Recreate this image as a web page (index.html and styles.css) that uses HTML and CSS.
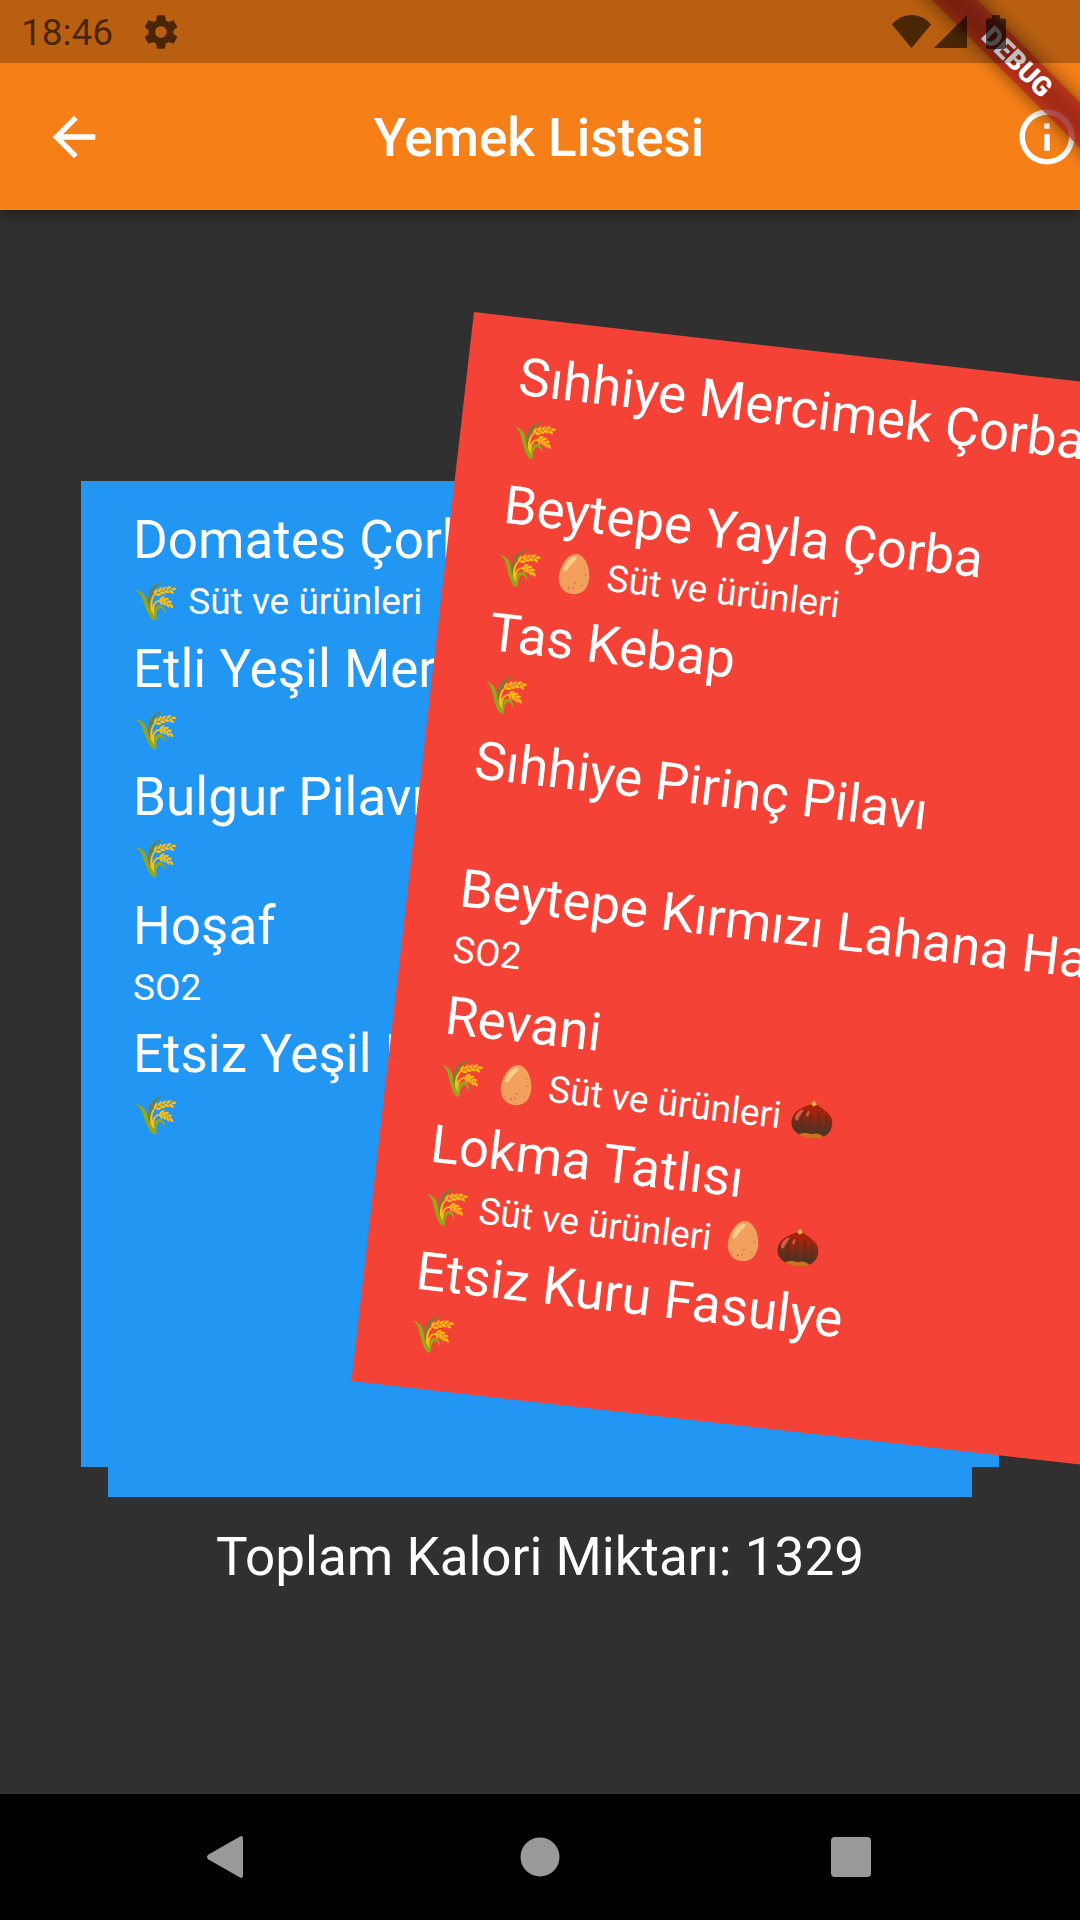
FILE: index.html
```html
<!DOCTYPE html>
<html lang="tr">
<head>
<meta charset="utf-8">
<meta name="viewport" content="width=device-width, initial-scale=1">
<title>Yemek Listesi</title>
<link rel="stylesheet" href="styles.css">
</head>
<body>
<header class="app-bar">
  <button class="icon-button back-button" type="button" aria-label="Geri">
    <svg viewBox="0 0 24 24"><path d="M20 11H7.83l5.59-5.59L12 4l-8 8 8 8 1.41-1.41L7.83 13H20v-2z"/></svg>
  </button>
  <h1 class="title">Yemek Listesi</h1>
  <button class="icon-button" type="button" aria-label="Bilgi">
    <svg viewBox="0 0 24 24"><path d="M11 7h2v2h-2zm0 4h2v6h-2zm1-9C6.48 2 2 6.48 2 12s4.48 10 10 10 10-4.48 10-10S17.52 2 12 2zm0 18c-4.41 0-8-3.59-8-8s3.59-8 8-8 8 3.59 8 8-3.59 8-8 8z"/></svg>
  </button>
</header>

<div class="debug-corner"><div class="debug-banner"><span>DEBUG</span></div></div>

<div class="status-bar">
  <span class="clock">18:46</span>
  <svg class="gear" viewBox="0 0 24 24"><path d="M19.43 12.98c.04-.32.07-.64.07-.98s-.03-.66-.07-.98l2.11-1.65c.19-.15.24-.42.12-.64l-2-3.46c-.12-.22-.39-.3-.61-.22l-2.49 1c-.52-.4-1.08-.73-1.69-.98l-.38-2.65C14.46 2.18 14.25 2 14 2h-4c-.25 0-.46.18-.49.42l-.38 2.65c-.61.25-1.17.59-1.69.98l-2.49-1c-.23-.09-.49 0-.61.22l-2 3.46c-.13.22-.07.49.12.64l2.11 1.65c-.04.32-.07.65-.07.98s.03.66.07.98l-2.11 1.65c-.19.15-.24.42-.12.64l2 3.46c.12.22.39.3.61.22l2.49-1c.52.4 1.08.73 1.69.98l.38 2.65c.03.24.24.42.49.42h4c.25 0 .46-.18.49-.42l.38-2.65c.61-.25 1.17-.59 1.69-.98l2.49 1c.23.09.49 0 .61-.22l2-3.46c.12-.22.07-.49-.12-.64l-2.11-1.65zM12 15.5c-1.93 0-3.5-1.57-3.5-3.5s1.57-3.5 3.5-3.5 3.5 1.57 3.5 3.5-1.57 3.5-3.5 3.5z"/></svg>
  <div class="signals">
    <svg class="wifi" viewBox="0 0 39 33"><path d="M19.500 33L0 9.500C5 3.500 12 0 19.500 0S34 3.500 39 9.500z"/></svg>
    <svg class="cell" viewBox="0 0 33 33"><path d="M0 33L33 0v33z"/></svg>
    <svg class="battery" viewBox="0 0 20 34"><path d="M6 0h8v3.500h3.500Q20 3.500 20 6v25.500q0 2.500-2.500 2.500h-15Q0 34 0 31.500V6q0-2.500 2.500-2.500H6z"/></svg>
  </div>
</div>

<main class="content">
  <div class="deck">
    <div class="card card-back"></div>
    <section class="card card-next">
      <ul class="menu menu-next">
        <li><span class="dish">Domates Çorba</span><span class="tags">🌾 Süt ve ürünleri</span></li>
        <li><span class="dish">Etli Yeşil Mercimek</span><span class="tags">🌾</span></li>
        <li><span class="dish">Bulgur Pilavı</span><span class="tags">🌾</span></li>
        <li><span class="dish">Hoşaf</span><span class="tags">SO2</span></li>
        <li><span class="dish">Etsiz Yeşil Mercimek</span><span class="tags">🌾</span></li>
      </ul>
    </section>
    <section class="card card-front">
      <ul class="menu menu-front">
        <li><span class="dish">Sıhhiye Mercimek Çorba</span><span class="tags">🌾</span></li>
        <li><span class="dish">Beytepe Yayla Çorba</span><span class="tags">🌾 🥚 Süt ve ürünleri</span></li>
        <li><span class="dish">Tas Kebap</span><span class="tags">🌾</span></li>
        <li><span class="dish">Sıhhiye Pirinç Pilavı</span></li>
        <li><span class="dish">Beytepe Kırmızı Lahana Havuç</span><span class="tags">SO2</span></li>
        <li><span class="dish">Revani</span><span class="tags">🌾 🥚 Süt ve ürünleri 🌰</span></li>
        <li><span class="dish">Lokma Tatlısı</span><span class="tags">🌾 Süt ve ürünleri 🥚 🌰</span></li>
        <li><span class="dish">Etsiz Kuru Fasulye</span><span class="tags">🌾</span></li>
      </ul>
    </section>
  </div>
  <p class="total">Toplam Kalori Miktarı: 1329</p>
</main>

<nav class="system-nav">
  <button type="button" aria-label="Geri"><svg viewBox="0 0 42 42"><path d="M36 0.500Q39 -1 39 2.500V39.500Q39 43 36 41.500L4.500 23.500Q1.500 21 4.500 18.500z"/></svg></button>
  <button type="button" aria-label="Ana ekran"><svg viewBox="0 0 42 42"><circle cx="21" cy="21" r="19.500"/></svg></button>
  <button type="button" aria-label="Son uygulamalar"><svg class="recents" viewBox="0 0 50 42"><rect x="1" y="1" width="40" height="40" rx="4"/></svg></button>
</nav>
</body>
</html>
```
FILE: styles.css
```css
* {
  box-sizing: border-box;
}

body {
  margin: 0;
  min-height: 100vh;
  display: flex;
  flex-direction: column;
  position: relative;
  overflow-x: hidden;
  background: #303030;
  color: #fff;
  font-family: Roboto, "Noto Color Emoji", sans-serif;
}

button {
  padding: 0;
  border: 0;
  background: none;
  color: inherit;
  font: inherit;
}

svg {
  display: block;
  fill: currentColor;
}

/* App bar */
.app-bar {
  height: 210px;
  padding: 63px 0 0 42px;
  display: flex;
  align-items: center;
  justify-content: space-between;
  background: #f67f17;
  box-shadow: 0 4px 12px rgba(0, 0, 0, 0.4);
  position: relative;
}

.icon-button,
.icon-button svg {
  width: 66px;
  height: 66px;
}

.back-button svg {
  width: 64px;
  height: 64px;
}

.title {
  margin: 0;
  flex: 1;
  padding: 2px 44px 0 0;
  text-align: center;
  font-size: 53px;
  line-height: 62px;
  font-weight: 500;
}

/* Debug ribbon over the corner */
.debug-corner {
  position: absolute;
  top: 0;
  right: 0;
  width: 300px;
  height: 300px;
  overflow: hidden;
  pointer-events: none;
}

.debug-banner {
  position: absolute;
  top: 46px;
  right: -87px;
  width: 300px;
  height: 32px;
  transform: rotate(45deg);
  text-align: center;
  font-size: 27px;
  line-height: 32px;
  font-weight: 900;
}

.debug-banner::before,
.debug-banner::after {
  content: "";
  position: absolute;
  inset: 0;
  background: rgba(0, 0, 0, 0.5);
  filter: blur(9px);
}

.debug-banner::after {
  background: rgba(183, 28, 28, 0.63);
  filter: none;
}

.debug-banner span {
  position: relative;
  z-index: 1;
}

/* Translucent status bar */
.status-bar {
  position: absolute;
  top: 0;
  left: 0;
  right: 0;
  height: 63px;
  padding: 0 74px 0 21px;
  display: flex;
  align-items: center;
  background: rgba(0, 0, 0, 0.25);
  color: rgba(0, 0, 0, 0.6);
}

.clock {
  padding-top: 3px;
  font-size: 37px;
  line-height: 44px;
}

.gear {
  width: 40px;
  height: 40px;
  margin-left: 28px;
}

.signals {
  margin-left: auto;
  display: flex;
}

.wifi {
  width: 39px;
  height: 33px;
  margin-right: 3px;
}

.cell {
  width: 33px;
  height: 33px;
  margin-right: 19px;
}

.battery {
  width: 20px;
  height: 34px;
}

/* Card deck */
.content {
  flex: 1;
  padding-top: 271px;
  overflow: clip;
}

.deck {
  position: relative;
  display: grid;
  justify-items: center;
}

.card {
  grid-area: 1 / 1;
  padding: 28px 52px 0;
  background: #2196f3;
}

.card-back {
  width: 80%;
}

.card-next {
  width: 85%;
  min-height: 986px;
  margin-bottom: 30px;
}

.card-front {
  position: absolute;
  top: -169px;
  left: 43.85%;
  width: 90%;
  min-height: 1076px;
  background: #f44336;
  transform: rotate(6.54deg);
  transform-origin: 0 0;
}

.menu {
  margin: 0;
  padding: 0;
  list-style: none;
  display: grid;
  grid-auto-rows: 1fr;
}

.menu-next {
  min-height: 643px;
}

.menu-front {
  min-height: 1029px;
}

.menu li {
  display: flex;
  flex-direction: column;
  gap: 9px;
  white-space: nowrap;
}

.dish {
  font-size: 53px;
  line-height: 62px;
}

.tags {
  height: 44px;
  font-size: 37px;
  line-height: 44px;
}

.total {
  margin: 0;
  padding-top: 29px;
  text-align: center;
  font-size: 53px;
  line-height: 62px;
}

/* System navigation */
.system-nav {
  height: 126px;
  padding: 0 15%;
  display: flex;
  align-items: center;
  justify-content: space-between;
  position: relative;
  background: #000;
  color: #999;
}

.system-nav button {
  width: 126px;
  height: 126px;
  display: grid;
  place-items: center;
}

.system-nav svg {
  width: 42px;
  height: 42px;
}

.system-nav .recents {
  width: 50px;
}
```
